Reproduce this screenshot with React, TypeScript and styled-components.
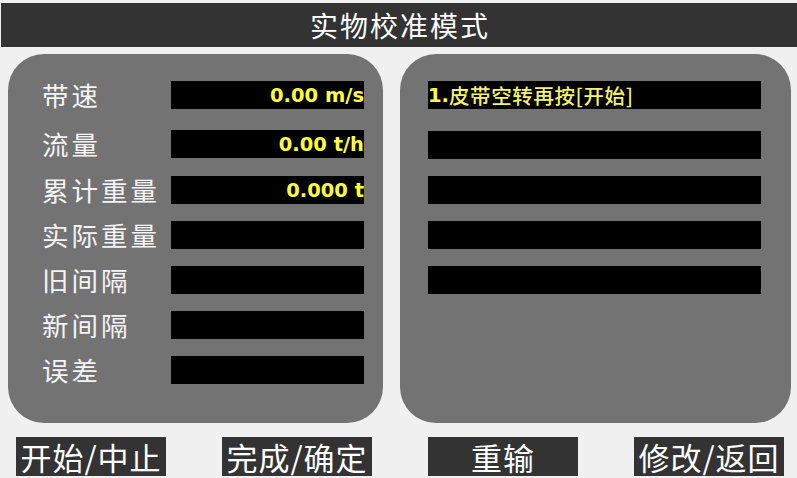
import React from "react";
import styled, { createGlobalStyle } from "styled-components";

const GlobalStyle = createGlobalStyle`
  html, body {
    margin: 0;
    padding: 0;
    background: #f0f0f0;
  }
  body {
    font-family: "Noto Sans CJK SC", "Noto Sans", sans-serif;
  }
`;

const Screen = styled.div`
  width: 797px;
  height: 478px;
  overflow: hidden;
  padding-top: 3px;
  box-sizing: border-box;
`;

const Header = styled.div`
  margin-left: 1px;
  height: 44px;
  background: #333333;
  color: #ffffff;
  display: flex;
  align-items: center;
  justify-content: center;
  font-size: 28px;
  letter-spacing: 2px;
  padding-left: 2px;
`;

const Panels = styled.div`
  display: flex;
  gap: 17px;
  margin-top: 7px;
  padding-left: 8px;
`;

const Panel = styled.div<{ $w: number; $pl: number }>`
  width: ${(p) => p.$w}px;
  height: 369px;
  box-sizing: border-box;
  background: #737373;
  border-radius: 36px;
  padding: 27px 0 0 ${(p) => p.$pl}px;
  display: flex;
  flex-direction: column;
  gap: 17px;
`;

const Row = styled.div<{ $extra?: number }>`
  display: flex;
  align-items: center;
  height: 28px;
  margin-bottom: ${(p) => p.$extra || 0}px;
`;

const Label = styled.div`
  width: 129px;
  color: #f4f4f4;
  font-size: 26.5px;
  letter-spacing: 3px;
  line-height: 28px;
  white-space: nowrap;
`;

const ValueBox = styled.div<{ $w: number }>`
  width: ${(p) => p.$w}px;
  height: 28px;
  background: #000000;
  display: flex;
  align-items: center;
  justify-content: flex-end;
  color: #ffff3c;
  font-family: "DejaVu Sans", "Noto Sans", sans-serif;
  font-weight: bold;
  font-size: 19.5px;
  white-space: nowrap;
`;

const MsgBox = styled(ValueBox)`
  justify-content: flex-start;
`;

const MsgNum = styled.span`
  font-family: "DejaVu Sans", sans-serif;
  font-weight: bold;
  font-size: 19.5px;
  color: #ffff3c;
`;

const MsgText = styled.span`
  font-family: "Noto Sans CJK SC", sans-serif;
  font-weight: 500;
  font-size: 20.5px;
  letter-spacing: 0.6px;
  color: #f4f46a;
`;

const Buttons = styled.div`
  display: flex;
  gap: 56px;
  margin-top: 14px;
  padding-left: 16px;
`;

const Button = styled.div`
  width: 150px;
  height: 39px;
  background: #333333;
  color: #ffffff;
  display: flex;
  align-items: center;
  justify-content: center;
  font-size: 31px;
  letter-spacing: 1px;
  white-space: nowrap;
`;

const leftRows = [
  { label: "带速", value: "0.00 m/s", extra: 4 },
  { label: "流量", value: "0.00 t/h", extra: 1 },
  { label: "累计重量", value: "0.000 t" },
  { label: "实际重量", value: "" },
  { label: "旧间隔", value: "" },
  { label: "新间隔", value: "" },
  { label: "误差", value: "" },
];

const rightRows = [
  { num: "1.", text: "皮带空转再按[开始]", extra: 5 },
  { num: "", text: "" },
  { num: "", text: "" },
  { num: "", text: "" },
  { num: "", text: "" },
];

const buttons = ["开始/中止", "完成/确定", "重输", "修改/返回"];

export default function App() {
  return (
    <Screen>
      <GlobalStyle />
      <Header>实物校准模式</Header>
      <Panels>
        <Panel $w={375} $pl={34}>
          {leftRows.map((r) => (
            <Row key={r.label} $extra={r.extra}>
              <Label>{r.label}</Label>
              <ValueBox $w={193}>{r.value}</ValueBox>
            </Row>
          ))}
        </Panel>
        <Panel $w={391} $pl={28}>
          {rightRows.map((r, i) => (
            <Row key={i} $extra={r.extra}>
              <MsgBox $w={333}>
                <MsgNum>{r.num}</MsgNum>
                <MsgText>{r.text}</MsgText>
              </MsgBox>
            </Row>
          ))}
        </Panel>
      </Panels>
      <Buttons>
        {buttons.map((b) => (
          <Button key={b}>{b}</Button>
        ))}
      </Buttons>
    </Screen>
  );
}
